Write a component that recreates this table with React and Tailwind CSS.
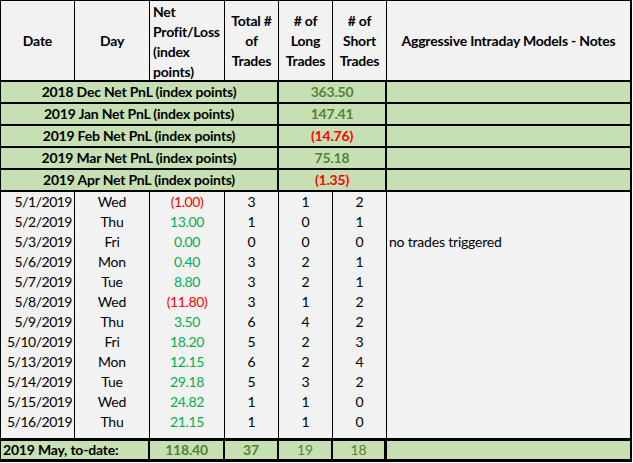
import React from "react";

const data = [
  ["5/1/2019", "Wed", "(1.00)", 3, 1, 2, ""],
  ["5/2/2019", "Thu", "13.00", 1, 0, 1, ""],
  ["5/3/2019", "Fri", "0.00", 0, 0, 0, "no trades triggered"],
  ["5/6/2019", "Mon", "0.40", 3, 2, 1, ""],
  ["5/7/2019", "Tue", "8.80", 3, 2, 1, ""],
  ["5/8/2019", "Wed", "(11.80)", 3, 1, 2, ""],
  ["5/9/2019", "Thu", "3.50", 6, 4, 2, ""],
  ["5/10/2019", "Fri", "18.20", 5, 2, 3, ""],
  ["5/13/2019", "Mon", "12.15", 6, 2, 4, ""],
  ["5/14/2019", "Tue", "29.18", 5, 3, 2, ""],
  ["5/15/2019", "Wed", "24.82", 1, 1, 0, ""],
  ["5/16/2019", "Thu", "21.15", 1, 1, 0, ""],
];

const months = [
  ["2018 Dec Net PnL (index points)", "363.50", false],
  ["2019 Jan Net PnL (index points)", "147.41", false],
  ["2019 Feb Net PnL (index points)", "(14.76)", true],
  ["2019 Mar Net PnL (index points)", "75.18", false],
  ["2019 Apr Net PnL (index points)", "(1.35)", true],
];

export default function App() {
  return (
    <div
      className="w-[633px] h-[463px] bg-white text-black"
      style={{ fontFamily: "Lato, 'Open Sans', sans-serif" }}
    >
      <div className="w-[632px] border-t border-l border-r-2 border-black text-[14px] leading-[20px] tracking-[-0.2px]">
        {/* Header */}
        <div className="flex h-[81px] bg-[#f2f2f2] border-b-2 border-black font-bold">
          <div className="w-[74px] border-r border-black flex items-center justify-center">Date</div>
          <div className="w-[75px] border-r border-black flex items-center justify-center">Day</div>
          <div className="w-[75px] border-r border-black pl-[3px] pt-[1px]">
            Net
            <br />
            Profit/Loss
            <br />
            (index
            <br />
            points)
          </div>
          <div className="w-[54px] border-r border-black flex items-center justify-center text-center">
            Total #<br />of<br />Trades
          </div>
          <div className="w-[54px] border-r border-black flex items-center justify-center text-center">
            # of<br />Long<br />Trades
          </div>
          <div className="w-[54px] border-r border-black flex items-center justify-center text-center">
            # of<br />Short<br />Trades
          </div>
          <div className="flex-1 flex items-center justify-center">Aggressive Intraday Models - Notes</div>
        </div>

        {/* Month rows */}
        {months.map(([label, val, neg]) => (
          <div key={label} className="flex h-[22px] bg-[#c6e0b4] border-b-2 border-black font-bold">
            <div className="w-[278px] border-r-2 border-black flex items-center justify-center">{label}</div>
            <div
              className={
                "w-[108px] border-r-2 border-black flex items-center justify-center " +
                (neg ? "text-[#ff0000]" : "text-[#548235]")
              }
            >
              {val}
            </div>
            <div className="flex-1" />
          </div>
        ))}

        {/* Data rows */}
        <div className="bg-[#f2f2f2]">
          {data.map((r) => {
            const neg = r[2].startsWith("(");
            return (
              <div key={r[0]} className="flex h-[20px]">
                <div className="w-[74px] border-r border-black text-right pr-[2px] tracking-[-0.5px]">{r[0]}</div>
                <div className="w-[75px] border-r border-black text-center">{r[1]}</div>
                <div
                  className={
                    "w-[75px] border-r border-black text-center tracking-[-0.4px] " +
                    (neg ? "text-[#ff0000]" : "text-[#00b050]")
                  }
                >
                  {r[2]}
                </div>
                <div className="w-[54px] border-r border-black text-center">{r[3]}</div>
                <div className="w-[54px] border-r border-black text-center">{r[4]}</div>
                <div className="w-[54px] border-r border-black text-center">{r[5]}</div>
                <div className="flex-1 pl-[2px]">{r[6]}</div>
              </div>
            );
          })}
          <div className="flex h-[6px]">
            <div className="w-[74px] border-r border-black" />
            <div className="w-[75px] border-r border-black" />
            <div className="w-[75px] border-r border-black" />
            <div className="w-[54px] border-r border-black" />
            <div className="w-[54px] border-r border-black" />
            <div className="w-[54px] border-r border-black" />
            <div className="flex-1" />
          </div>
        </div>

        {/* Footer */}
        <div className="flex h-[24px] bg-[#c6e0b4] border-t-[3px] border-b-[3px] border-black">
          <div className="w-[149px] border-r-2 border-black font-bold pl-[2px] flex items-center">2019 May, to-date:</div>
          <div className="w-[75px] border-r-2 border-black font-bold text-[#548235] flex items-center justify-center">118.40</div>
          <div className="w-[54px] border-r-2 border-black font-bold text-[#548235] flex items-center justify-center">37</div>
          <div className="w-[54px] border-r-2 border-black text-[#548235] flex items-center justify-center">19</div>
          <div className="w-[54px] border-r-[3px] border-black text-[#548235] flex items-center justify-center">18</div>
          <div className="flex-1" />
        </div>
      </div>
    </div>
  );
}
